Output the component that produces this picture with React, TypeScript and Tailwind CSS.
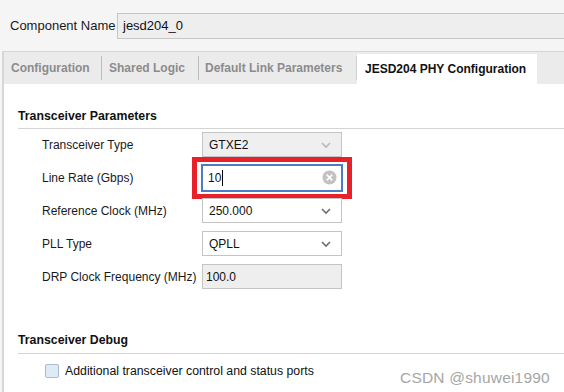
import React from 'react';

const Chevron = ({ light }: { light?: boolean }) => (
  <svg width="12" height="8" viewBox="0 0 12 8" className="shrink-0">
    <path d="M2 2 L6 6 L10 2" fill="none" stroke={light ? '#b8b8b8' : '#6e6e6e'} strokeWidth="1.6" />
  </svg>
);

const Row = ({ label, children }: { label: string; children: React.ReactNode }) => (
  <div className="flex items-center h-[33px]">
    <span className="w-[184px] shrink-0 pl-[24px] whitespace-nowrap text-[12px] text-[#1a1a1a]">{label}</span>
    {children}
  </div>
);

const Select = ({ value, disabled }: { value: string; disabled?: boolean }) => (
  <div
    className={`w-[140px] h-[25px] border border-[#c4c4c4] flex items-center justify-between pl-[6px] pr-[9px] text-[12px] text-[#111] ${
      disabled ? 'bg-[#efefef]' : 'bg-white'
    }`}
  >
    <span>{value}</span>
    <Chevron light={disabled} />
  </div>
);

export default function App() {
  const tabs = [
    { t: 'Configuration', w: 'w-[98px] pl-[7px]' },
    { t: 'Shared Logic', w: 'w-[97px] pl-[7px]' },
    { t: 'Default Link Parameters', w: 'w-[158px] pl-[6px]' },
  ];

  return (
    <div className="w-[564px] h-[392px] bg-[#f5f5f5] overflow-hidden relative" style={{ fontFamily: '"Liberation Sans", Arial, sans-serif' }}>
      {/* component name */}
      <div className="flex items-center h-[51px] pl-[10px]">
        <span className="text-[13px] text-[#1a1a1a] w-[107px]">Component Name</span>
        <div className="flex-1 h-[26px] -mr-[4px] bg-[#eeeeee] border border-[#c6c6c6] flex items-center pl-[5px] text-[13px] text-[#111]">
          jesd204_0
        </div>
      </div>

      {/* panel */}
      <div className="ml-[2px] border-l-2 border-t border-[#d6d6d6] bg-white h-[341px]">
        <div className="flex h-[32px] bg-[#ebebeb] text-[12px] font-bold">
          {tabs.map((x, i) => (
            <div key={x.t} className={`flex items-center justify-between ${x.w}`}>
              <span className="text-[#8c8c8c] whitespace-nowrap">{x.t}</span>
              <div className={`w-px h-[24px] ${i === 2 ? 'bg-[#cfcfcf]' : 'bg-[#bdbdbd]'}`} />
            </div>
          ))}
          <div className="mt-[2px] w-[180px] bg-white flex items-center pl-[8px] text-[#111] whitespace-nowrap">
            JESD204 PHY Configuration
          </div>
        </div>

        <div className="pl-[14px] pt-[23px]">
          <div className="text-[12.3px] font-bold text-[#111] pb-[3px] border-b border-[#d4d4d4]">Transceiver Parameters</div>
          <div className="-mt-[1px]">
            <Row label="Transceiver Type">
              <Select value="GTXE2" disabled />
            </Row>
            <Row label="Line Rate (Gbps)">
              <div className="-ml-[10px] border-[5px] border-[#e8202a] px-[4px] py-[2px] -my-[4.5px]">
                <div className="w-[142px] h-[28px] border-2 border-[#4d7cc6] bg-white flex items-center justify-between pl-[5px] pr-[4px] text-[12px] text-[#111]">
                  <span className="flex items-center">
                    10<span className="inline-block w-px h-[16px] bg-black ml-px" />
                  </span>
                  <svg width="15" height="15" viewBox="0 0 16 16">
                    <circle cx="8" cy="8" r="7.5" fill="#c2c2c2" />
                    <path d="M5 5 L11 11 M11 5 L5 11" stroke="#fff" strokeWidth="1.8" />
                  </svg>
                </div>
              </div>
            </Row>
            <Row label="Reference Clock (MHz)">
              <Select value="250.000" />
            </Row>
            <Row label="PLL Type">
              <Select value="QPLL" />
            </Row>
            <Row label="DRP Clock Frequency (MHz)">
              <div className="w-[140px] h-[25px] border border-[#c4c4c4] bg-[#eeeeee] flex items-center pl-[3px] text-[12px] text-[#111]">
                100.0
              </div>
            </Row>
          </div>

          <div className="mt-[38px] text-[12.3px] font-bold text-[#111] pb-[3px] border-b border-[#d4d4d4]">Transceiver Debug</div>
          <div className="flex items-center pt-[8px] pl-[27px]">
            <div className="w-[14px] h-[14px] rounded-[2px] border border-[#a9bcd4] bg-[#dfeaf7]" />
            <span className="ml-[6px] text-[12.3px] text-[#111]">Additional transceiver control and status ports</span>
          </div>
        </div>
      </div>

      <div className="absolute left-[400px] top-[366px] text-[15.5px] text-[#a6a6a6] tracking-[0.2px]">CSDN @shuwei1990</div>
    </div>
  );
}
